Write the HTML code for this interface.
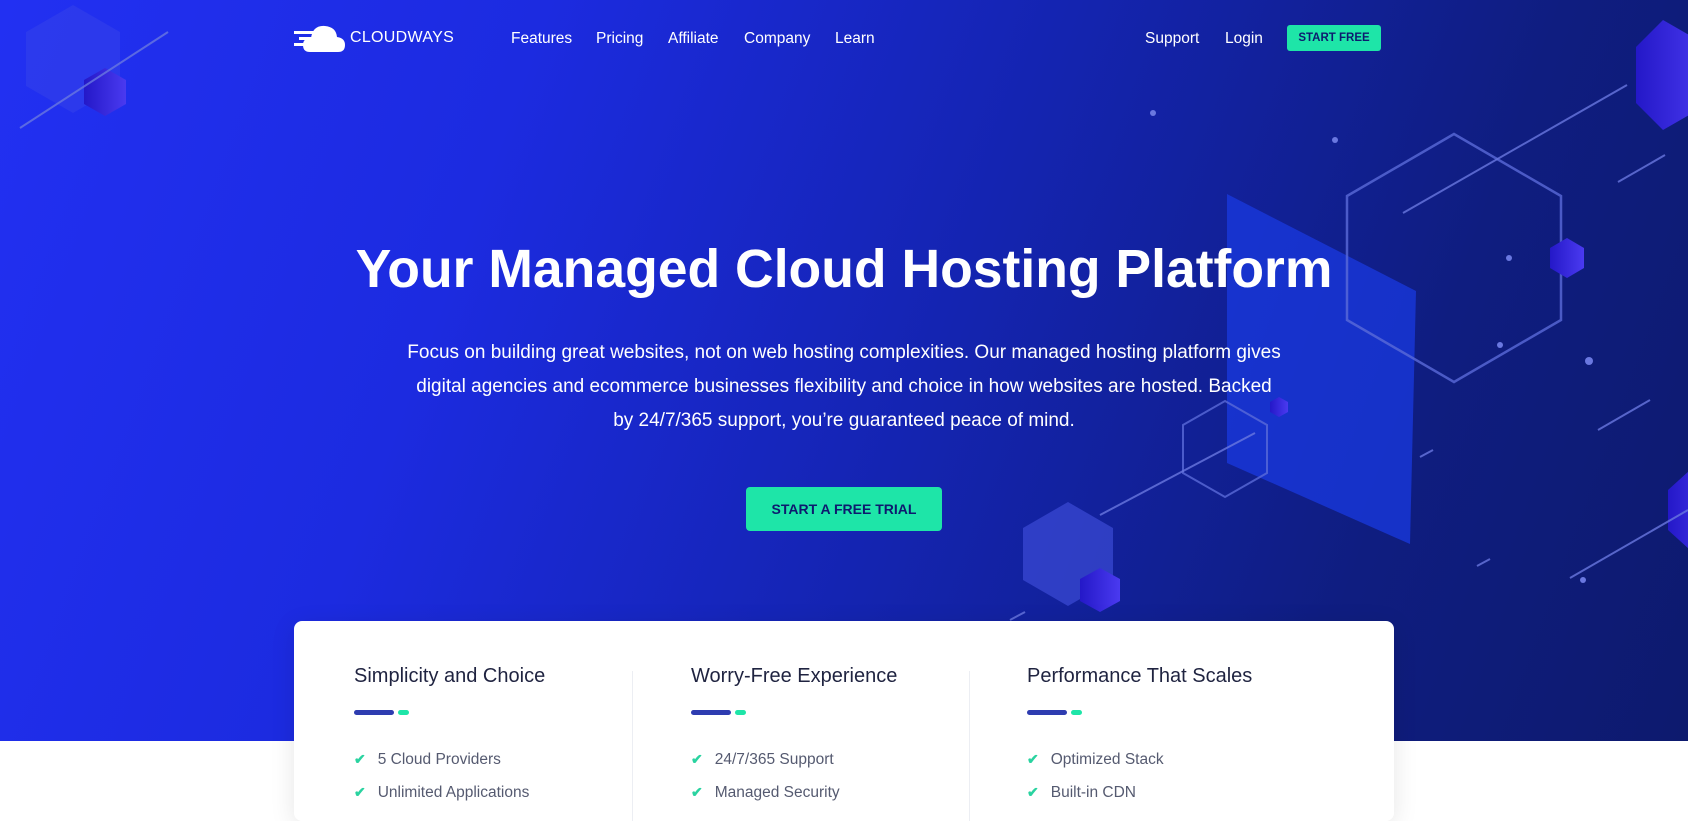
<!DOCTYPE html>
<html><head><meta charset="utf-8"><style>
*{margin:0;padding:0;box-sizing:border-box}
body{width:1688px;height:810px;overflow:hidden;font-family:"Liberation Sans",sans-serif;background:#fff;position:relative}
.hero{position:absolute;left:0;top:0;width:1688px;height:741px;background:linear-gradient(110deg,#2230f2 0%,#1c2be0 28%,#1424b0 55%,#0f1d80 80%,#0d1a6e 100%)}
svg.bg{position:absolute;left:0;top:0}
.nav{position:absolute;top:30px;color:#fff;font-size:15.5px}
.logo{position:absolute;left:294px;top:22px;color:#fff;font-size:16px;letter-spacing:.3px}
.btn-s{position:absolute;left:1287px;top:25px;width:94px;height:26px;background:#1ee5a8;color:#0d1a6e;font-size:11.5px;font-weight:bold;text-align:center;line-height:26px;border-radius:3px}
h1{position:absolute;left:0;width:1688px;top:239px;text-align:center;color:#fff;font-size:53.5px;font-weight:bold}
.p{position:absolute;left:392px;width:904px;top:336px;text-align:center;color:#fff;font-size:19px;line-height:34px}
.cta{position:absolute;left:746px;top:487px;width:196px;height:44px;background:#1ee5a8;color:#0d1a6e;font-weight:bold;font-size:14px;text-align:center;line-height:44px;border-radius:4px}
.card{position:absolute;left:294px;top:621px;width:1100px;height:200px;background:#fff;border-radius:8px;box-shadow:0 5px 25px rgba(0,0,0,.1)}
.col{position:absolute;top:44px}
.col h3{font-weight:normal;font-size:20px;color:#1f2340}
.bar{margin-top:22px;height:5px;position:relative}
.bar:before{content:"";position:absolute;left:0;top:0;width:40px;height:5px;border-radius:3px;background:#2e3cb0}
.bar:after{content:"";position:absolute;left:44px;top:0;width:11px;height:5px;border-radius:3px;background:#1ee5a8}
.li{font-size:15.5px;color:#555a70;height:33px;line-height:33px}
.li b{color:#2ad3a0;margin-right:12px;font-size:14px}
.div{position:absolute;top:50px;width:1px;height:150px;background:#eceef3}
</style></head><body>
<div class="hero"></div>
<svg class="bg" width="1688" height="741">
<defs><linearGradient id="g" x1="0" x2="1"><stop offset="0" stop-color="#2418c8"/><stop offset="1" stop-color="#4a3af0"/></linearGradient></defs>
<polygon points="73,5 120,32 120,86 73,113 26,86 26,32" fill="#3a48e8" opacity=".45"/>
<polygon points="105,68 126,80 126,104 105,116 84,104 84,80" fill="url(#g)"/>
<polygon points="1227,194 1416,291 1410,544 1227,463" fill="#1a3ae0" opacity=".75"/>
<polygon points="1454,134 1561,196 1561,320 1454,382 1347,320 1347,196" fill="none" stroke="#5a6ad8" stroke-width="2.5" opacity=".8"/>
<polygon points="1225,401 1267,425 1267,473 1225,497 1183,473 1183,425" fill="none" stroke="#5a6ad8" stroke-width="2" opacity=".8"/>
<polygon points="1068,502 1113,528 1113,580 1068,606 1023,580 1023,528" fill="#4252e0" opacity=".6"/>
<polygon points="1100,568 1120,579 1120,601 1100,612 1080,601 1080,579" fill="url(#g)"/>
<polygon points="1567,238 1584,248 1584,268 1567,278 1550,268 1550,248" fill="url(#g)"/>
<polygon points="1279,397 1288,402 1288,412 1279,417 1270,412 1270,402" fill="url(#g)"/>
<polygon points="1663,20 1710,47 1710,103 1663,130 1636,103 1636,47" fill="url(#g)"/>
<polygon points="1690,470 1720,490 1720,530 1690,550 1668,530 1668,490" fill="url(#g)"/>
<g stroke="#6a78e0" stroke-width="2" opacity=".8">
<line x1="1403" y1="213" x2="1627" y2="85"/><line x1="1618" y1="182" x2="1665" y2="155"/>
<line x1="1598" y1="430" x2="1650" y2="400"/><line x1="1570" y1="578" x2="1688" y2="510"/>
<line x1="1420" y1="457" x2="1433" y2="450"/><line x1="1477" y1="566" x2="1490" y2="559"/>
<line x1="1100" y1="515" x2="1255" y2="433"/><line x1="20" y1="128" x2="168" y2="32"/>
<line x1="1010" y1="620" x2="1025" y2="612"/>
</g>
<g fill="#6a78e0"><circle cx="1153" cy="113" r="3"/><circle cx="1335" cy="140" r="3"/><circle cx="1509" cy="258" r="3"/><circle cx="1500" cy="345" r="3"/><circle cx="1589" cy="361" r="4"/><circle cx="1583" cy="580" r="3"/></g>
</svg>
<div class="logo"><svg width="56" height="32" style="vertical-align:middle"><rect x="0" y="9" width="22" height="3" fill="#fff"/><rect x="5" y="15" width="18" height="3" fill="#fff"/><rect x="0" y="21" width="22" height="3" fill="#fff"/><path d="M16 30 Q9 30 9 23 Q9 16 17 16 Q19 3 31 4 Q42 5 43 15 Q51 16 51 23 Q51 30 44 30 Z" fill="#fff"/></svg>CLOUDWAYS</div>
<div class="nav" style="left:511px">Features</div>
<div class="nav" style="left:596px">Pricing</div>
<div class="nav" style="left:668px">Affiliate</div>
<div class="nav" style="left:744px">Company</div>
<div class="nav" style="left:835px">Learn</div>
<div class="nav" style="left:1145px">Support</div>
<div class="nav" style="left:1225px">Login</div>
<div class="btn-s">START FREE</div>
<h1>Your Managed Cloud Hosting Platform</h1>
<div class="p">Focus on building great websites, not on web hosting complexities. Our managed hosting platform gives digital agencies and ecommerce businesses flexibility and choice in how websites are hosted. Backed<br>by 24/7/365 support, you’re guaranteed peace of mind.</div>
<div class="cta">START A FREE TRIAL</div>
<div class="card">
<div class="div" style="left:338px"></div><div class="div" style="left:675px"></div>
<div class="col" style="left:60px"><h3>Simplicity and Choice</h3><div class="bar"></div><div style="height:28px"></div><div class="li"><b>✔</b>5 Cloud Providers</div><div class="li"><b>✔</b>Unlimited Applications</div></div>
<div class="col" style="left:397px"><h3>Worry-Free Experience</h3><div class="bar"></div><div style="height:28px"></div><div class="li"><b>✔</b>24/7/365 Support</div><div class="li"><b>✔</b>Managed Security</div></div>
<div class="col" style="left:733px"><h3>Performance That Scales</h3><div class="bar"></div><div style="height:28px"></div><div class="li"><b>✔</b>Optimized Stack</div><div class="li"><b>✔</b>Built-in CDN</div></div>
</div>
</body></html>
